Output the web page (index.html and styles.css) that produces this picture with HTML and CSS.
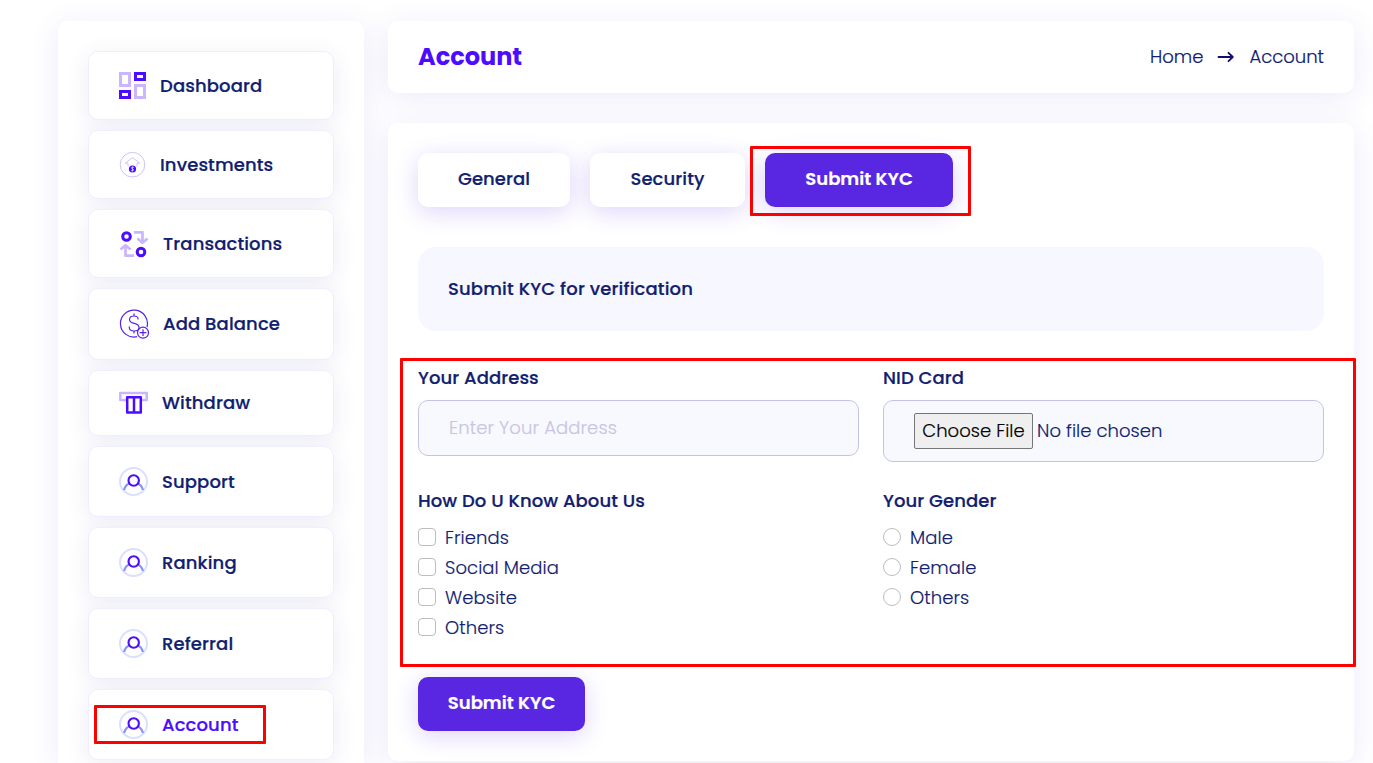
FILE: index.html
```html
<!DOCTYPE html>
<html lang="en">
<head>
<meta charset="utf-8">
<title>Account</title>
<link rel="stylesheet" href="styles.css">
</head>
<body>
<svg class="defs" width="0" height="0">
  <symbol id="user" viewBox="0 0 29 29">
    <circle cx="14.5" cy="14.5" r="13.5" fill="none" stroke="#dbe0ff" stroke-width="2"/>
    <path d="M5 23C6 19.300 8 17 11 16.200M24 23C23 19.300 21 17 18 16.200" fill="none" stroke="#8790f5" stroke-width="2.200"/>
    <circle cx="14.700" cy="13.500" r="5.200" fill="#fff" stroke="#4b0cff" stroke-width="2.100"/>
  </symbol>
</svg>
<div class="page">
  <nav class="sidebar">
    <a class="item"><svg class="icon" viewBox="0 0 28 28"><g fill="none" stroke-width="3"><path d="M1.500 1.500h9v12h-9zM16.500 13.500h9v12h-9z" stroke="#c9b6ff"/><path d="M16.500 1.500h9v6h-9zM1.500 19.500h9v6h-9z" stroke="#4b0cff"/></g></svg><span>Dashboard</span></a>
    <a class="item"><svg class="icon" viewBox="0 0 28 28"><circle cx="13.500" cy="13.700" r="12.300" fill="none" stroke="#d0c0ff"/><path d="M9 15.500v-3.300H6.200l7.300-5.700 7.300 5.700H18v3.300" fill="none" stroke="#d0c0ff"/><circle cx="13.500" cy="18" r="3.600" fill="#4b0cff"/><path d="M15 16.500c-2.800-1.200-3.500 1-1.500 1.500s1.200 2.500-1.500 1.500M13.500 15.500v5" fill="none" stroke="#fff" stroke-width=".6"/></svg><span>Investments</span></a>
    <a class="item wide"><svg class="icon" viewBox="0 0 30 28"><g fill="none" stroke="#c9b6ff" stroke-width="2.700" stroke-linejoin="round"><path d="M15 2.300h8.500v10M18.500 8.500l5 4.300 5-4.300M15 25.700H6.500v-10M1.500 19.500l5-4.300 5 4.300"/></g><g fill="none" stroke="#4b0cff" stroke-width="3"><circle cx="7.500" cy="6.500" r="3.800"/><circle cx="22" cy="22" r="3.800"/></g></svg><span>Transactions</span></a>
    <a class="item add"><svg class="icon" viewBox="0 0 30 30"><g fill="none" stroke="#5520e8" stroke-width="1.200"><path d="M18 27.700A13.500 13.500 0 1 1 28 18"/><path d="M19 10.500v-1c0-1.500-1.800-2.500-4-2.500s-4.500 1-4.500 3.700c0 5 9.500 2.300 9.500 7.500 0 2.500-2 3.800-4.700 3.800-3 0-5-1.300-5-3.500v-1M15 4.500V7M15 22v2.500"/><circle cx="24" cy="23.700" r="5.500"/><path d="M24 20.300v6.800M20.600 23.700h6.800"/></g></svg><span>Add Balance</span></a>
    <a class="item withdraw"><svg class="icon" viewBox="0 0 29 28"><path d="M7 11H1.300V4h26.400v7H23" fill="none" stroke="#c9b6ff" stroke-width="2.600" stroke-linejoin="round"/><path d="M8.200 8.200h13.600v15.200H8.200zM15 8v15" fill="none" stroke="#4b0cff" stroke-width="2.500" stroke-linejoin="round"/></svg><span>Withdraw</span></a>
    <a class="item person"><svg class="icon"><use href="#user"/></svg><span>Support</span></a>
    <a class="item person"><svg class="icon"><use href="#user"/></svg><span>Ranking</span></a>
    <a class="item person"><svg class="icon"><use href="#user"/></svg><span>Referral</span></a>
    <a class="item person active"><svg class="icon"><use href="#user"/></svg><span>Account</span><i class="mark"></i></a>
  </nav>
  <main class="main">
    <header class="panel header">
      <h1>Account</h1>
      <div class="crumbs"><span>Home</span><svg width="18" height="14" viewBox="0 0 18 14"><path d="M1.500 7h14M11.500 2.800l4.300 4.200-4.300 4.200" fill="none" stroke="#140d6b" stroke-width="1.800" stroke-linecap="round" stroke-linejoin="round"/></svg><span>Account</span></div>
    </header>
    <section class="panel content">
      <div class="tabs">
        <button class="btn general"><span>General</span></button>
        <button class="btn security"><span>Security</span></button>
        <button class="btn primary kyc"><span>Submit KYC</span><i class="mark"></i></button>
      </div>
      <div class="notice"><span>Submit KYC for verification</span></div>
      <form class="form">
        <div class="field"><label>Your Address</label><div class="control"><span class="placeholder">Enter Your Address</span></div></div>
        <div class="field"><label>NID Card</label><div class="control file"><span class="choose"><span>Choose File</span></span><span>No file chosen</span></div></div>
        <div class="field choices"><label>How Do U Know About Us</label>
          <div class="opt"><i class="box"></i><span>Friends</span></div>
          <div class="opt"><i class="box"></i><span>Social Media</span></div>
          <div class="opt"><i class="box"></i><span>Website</span></div>
          <div class="opt"><i class="box"></i><span>Others</span></div>
        </div>
        <div class="field choices"><label>Your Gender</label>
          <div class="opt"><i class="box round"></i><span>Male</span></div>
          <div class="opt"><i class="box round"></i><span>Female</span></div>
          <div class="opt"><i class="box round"></i><span>Others</span></div>
        </div>
        <i class="mark"></i>
      </form>
      <button class="btn primary submit"><span>Submit KYC</span></button>
    </section>
  </main>
</div>
</body>
</html>
```
FILE: styles.css
```css
* { box-sizing: border-box; }
html, body { height: 100%; }
body { margin: 0; overflow: hidden; background: #fff; color: #10206f; font: 500 18px/30px Poppins, Inter, sans-serif; }
.defs { position: absolute; }
.page { display: flex; gap: 24px; align-items: stretch; padding: 21px 19px 0 58px; height: 763px; overflow: hidden; }
.sidebar { width: 306px; flex: none; padding: 30px; border-radius: 10px 10px 0 0; background: #fff; box-shadow: 0 5px 30px rgba(82, 63, 205, .11); display: flex; flex-direction: column; gap: 10px; }
.item { position: relative; flex: none; display: flex; align-items: center; width: 246px; height: 69px; padding: 1px 0 0 30px; border: 1px solid #f0eeff; border-radius: 10px; background: #fff; box-shadow: 0 5px 25px rgba(60, 60, 160, .09); white-space: nowrap; }
.item span { letter-spacing: .12px; -webkit-text-stroke: .2px currentColor; }
.item .icon { width: 28px; height: 28px; margin-right: 13px; flex: none; }
.item.wide .icon { width: 30px; margin: 0 14px 1px 0; }
.item.add { height: 72px; padding-top: 0; }
.item.add .icon { width: 30px; height: 30px; margin-right: 14px; }
.item.withdraw { height: 66px; padding-top: 0; }
.item.withdraw .icon { width: 29px; margin-right: 14px; }
.item.person { height: 71px; }
.item.person .icon { width: 29px; height: 29px; margin: 0 14px 2px 0; }
.active { color: #4b0cff; }
.mark { position: absolute; border: 3px solid #f00; border-radius: 1px; pointer-events: none; }
.active .mark { left: 5px; top: 15px; width: 172px; height: 39px; }

.main { flex: 1; display: flex; flex-direction: column; gap: 30px; }
.panel { background: #fff; border-radius: 10px; box-shadow: 0 5px 30px rgba(82, 63, 205, .11); }
.header { flex: none; height: 72px; padding: 0 30px; display: flex; align-items: center; justify-content: space-between; }
h1 { margin: 0; color: #4b0cff; font-size: 24px; font-weight: 700; line-height: 36px; }
.crumbs { display: flex; align-items: center; gap: 14px; font-weight: 300; -webkit-text-stroke: .2px currentColor; }
.content { flex: none; height: 638px; padding: 30px; }
.tabs { display: flex; gap: 20px; }
.btn { position: relative; display: flex; align-items: center; justify-content: center; height: 54px; padding: 0 0 3px; border: 0; border-radius: 10px; background: #fff; color: inherit; font: inherit; font-weight: 500; white-space: nowrap; -webkit-text-stroke: .2px currentColor; box-shadow: 0 5px 25px rgba(89, 38, 225, .2); }
.general { width: 152px; letter-spacing: .05px; }
.security { width: 155px; letter-spacing: .1px; }
.kyc { width: 188px; }
.primary { background: #5926e1; color: #fff; font-weight: 600; }
.kyc .mark { left: -15px; top: -7px; width: 221px; height: 70px; }
.notice { height: 84px; margin-top: 40px; padding: 0 30px; display: flex; align-items: center; border-radius: 18px; background: #f7f7ff; letter-spacing: .15px; -webkit-text-stroke: .2px currentColor; }
.form { position: relative; display: grid; grid-template-columns: 441px 441px; column-gap: 24px; margin-top: 32px; }
.form > .mark { left: -18px; top: -5px; width: 956px; height: 309px; }
.field { height: 123px; white-space: nowrap; }
.field label { display: block; height: 37px; line-height: 30px; letter-spacing: .08px; -webkit-text-stroke: .2px currentColor; }
.control { height: 56px; padding: 0 30px; display: flex; align-items: center; border: 1px solid #c5c3e4; border-radius: 10px; background: #f8f8ff; font-weight: 300; letter-spacing: .05px; -webkit-text-stroke: .15px currentColor; }
.placeholder { color: #c8c5e2; letter-spacing: .1px; }
.file { height: 62px; gap: 4px; }
.choose { width: 119px; height: 36px; display: flex; align-items: center; justify-content: center; border: 1px solid #767676; border-radius: 2px; background: #efefef; color: #000; }
.choices { height: 191px; }
.choices label { height: 36px; }
.opt { display: flex; align-items: center; height: 30px; gap: 9px; font-weight: 300; letter-spacing: .08px; -webkit-text-stroke: .15px currentColor; }
.opt span { padding-top: 2px; }
.box { width: 18px; height: 18px; margin-top: -1px; border: 1px solid #bdbdc1; border-radius: 4px; background: #fff; }
.round { border-radius: 50%; }
.submit { width: 167px; }
```
